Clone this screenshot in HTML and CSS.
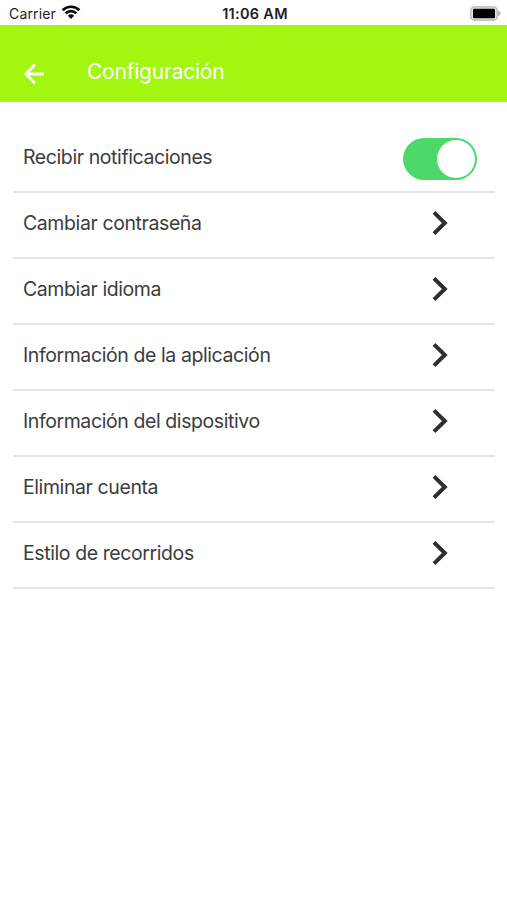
FILE: index.html
```html
<!DOCTYPE html>
<html lang="es">
<head>
<meta charset="utf-8">
<title>Configuración</title>
<link rel="stylesheet" href="styles.css">
</head>
<body>
<div class="status">
  <div class="carrier"><span>Carrier</span>
    <svg class="wifi" width="20" height="16" viewBox="0 0 20 16"><g fill="none" stroke="#080808" stroke-width="2.7"><path d="M1.6 6.2a11.9 11.9 0 0 1 16.8 0"/><path d="M4.7 9.4a7.5 7.5 0 0 1 10.6 0"/></g><path d="M10 15l-3.1-3.2a4.5 4.5 0 0 1 6.2 0z" fill="#080808"/></svg>
  </div>
  <div class="clock">11:06 AM</div>
  <svg class="battery" width="31" height="15" viewBox="0 0 31 15"><rect x=".8" y=".8" width="26.4" height="13.4" rx="3.8" fill="#e2e2e2" stroke="#b4b4b4" stroke-width="1.2"/><rect x="3" y="2.8" width="22" height="9.4" rx="1.2" fill="#000"/><path d="M28.2 4.8q2.4 .8 2.4 2.7t-2.4 2.7z" fill="#b0b0b0"/></svg>
</div>
<header class="bar">
  <svg class="back" width="20" height="20" viewBox="0 0 20 20"><path d="M10.2 1.2L2 10l8.2 8.6M2 10H19" fill="none" stroke="#fff" stroke-width="2.8" stroke-linecap="round"/></svg>
  <h1 class="title">Configuración</h1>
</header>
<main class="list">
  <div class="row"><span class="label">Recibir notificaciones</span><span class="switch"><span class="knob"></span></span></div>
  <div class="row"><span class="label">Cambiar contraseña</span><svg class="chev" width="17" height="26" viewBox="0 0 17 26"><path d="M2 2.4L12.8 13L2 23.6"/></svg></div>
  <div class="row"><span class="label">Cambiar idioma</span><svg class="chev" width="17" height="26" viewBox="0 0 17 26"><path d="M2 2.4L12.8 13L2 23.6"/></svg></div>
  <div class="row"><span class="label">Información de la aplicación</span><svg class="chev" width="17" height="26" viewBox="0 0 17 26"><path d="M2 2.4L12.8 13L2 23.6"/></svg></div>
  <div class="row"><span class="label">Información del dispositivo</span><svg class="chev" width="17" height="26" viewBox="0 0 17 26"><path d="M2 2.4L12.8 13L2 23.6"/></svg></div>
  <div class="row"><span class="label">Eliminar cuenta</span><svg class="chev" width="17" height="26" viewBox="0 0 17 26"><path d="M2 2.4L12.8 13L2 23.6"/></svg></div>
  <div class="row"><span class="label">Estilo de recorridos</span><svg class="chev" width="17" height="26" viewBox="0 0 17 26"><path d="M2 2.4L12.8 13L2 23.6"/></svg></div>
</main>
</body>
</html>
```
FILE: styles.css
```css
* { box-sizing: border-box; }
body {
  margin: 0;
  min-height: 900px;
  background: #fff;
  color: #3c3c3c;
  font-family: Inter, "Liberation Sans", sans-serif;
}
.status {
  display: grid;
  grid-template-columns: 1fr auto 1fr;
  align-items: center;
  height: 25px;
  padding: 2px 6px 0 9px;
  color: #1c1c1c;
  font-size: 14px;
  line-height: 22px;
}
.carrier { display: flex; align-items: center; gap: 5px; letter-spacing: 0.15px; }
.wifi { margin-top: -3px; }
.clock { font-size: 14.5px; font-weight: 600; letter-spacing: 0.3px; }
.battery { justify-self: end; margin-top: -1px; }
.bar {
  display: flex;
  align-items: center;
  height: 77px;
  padding: 16px 0 0 24px;
  background: #a3f610;
}
.back { margin-top: 5px; }
.title {
  margin: 1px 0 0 43px;
  color: #fff;
  font-size: 21px;
  font-weight: 400;
  line-height: 30px;
  letter-spacing: -0.22px;
}
.list { padding: 25px 12px 0 13px; }
.row {
  display: flex;
  align-items: center;
  justify-content: space-between;
  height: 66px;
  padding-left: 10px;
  border-bottom: 2px solid #e5e5e5;
}
.label { font-size: 19.5px; line-height: 26px; letter-spacing: -0.41px; margin-top: -4px; }
.chev { margin: -4px 46px 0 0; fill: none; stroke: #2f2f2f; stroke-width: 4; }
.switch {
  display: flex;
  justify-content: flex-end;
  width: 74px;
  height: 42px;
  margin-right: 18px;
  margin-top: -1px;
  padding: 2px;
  border-radius: 21px;
  background: #4cd96a;
}
.knob { width: 38px; height: 38px; border-radius: 50%; background: #fff; }
```
